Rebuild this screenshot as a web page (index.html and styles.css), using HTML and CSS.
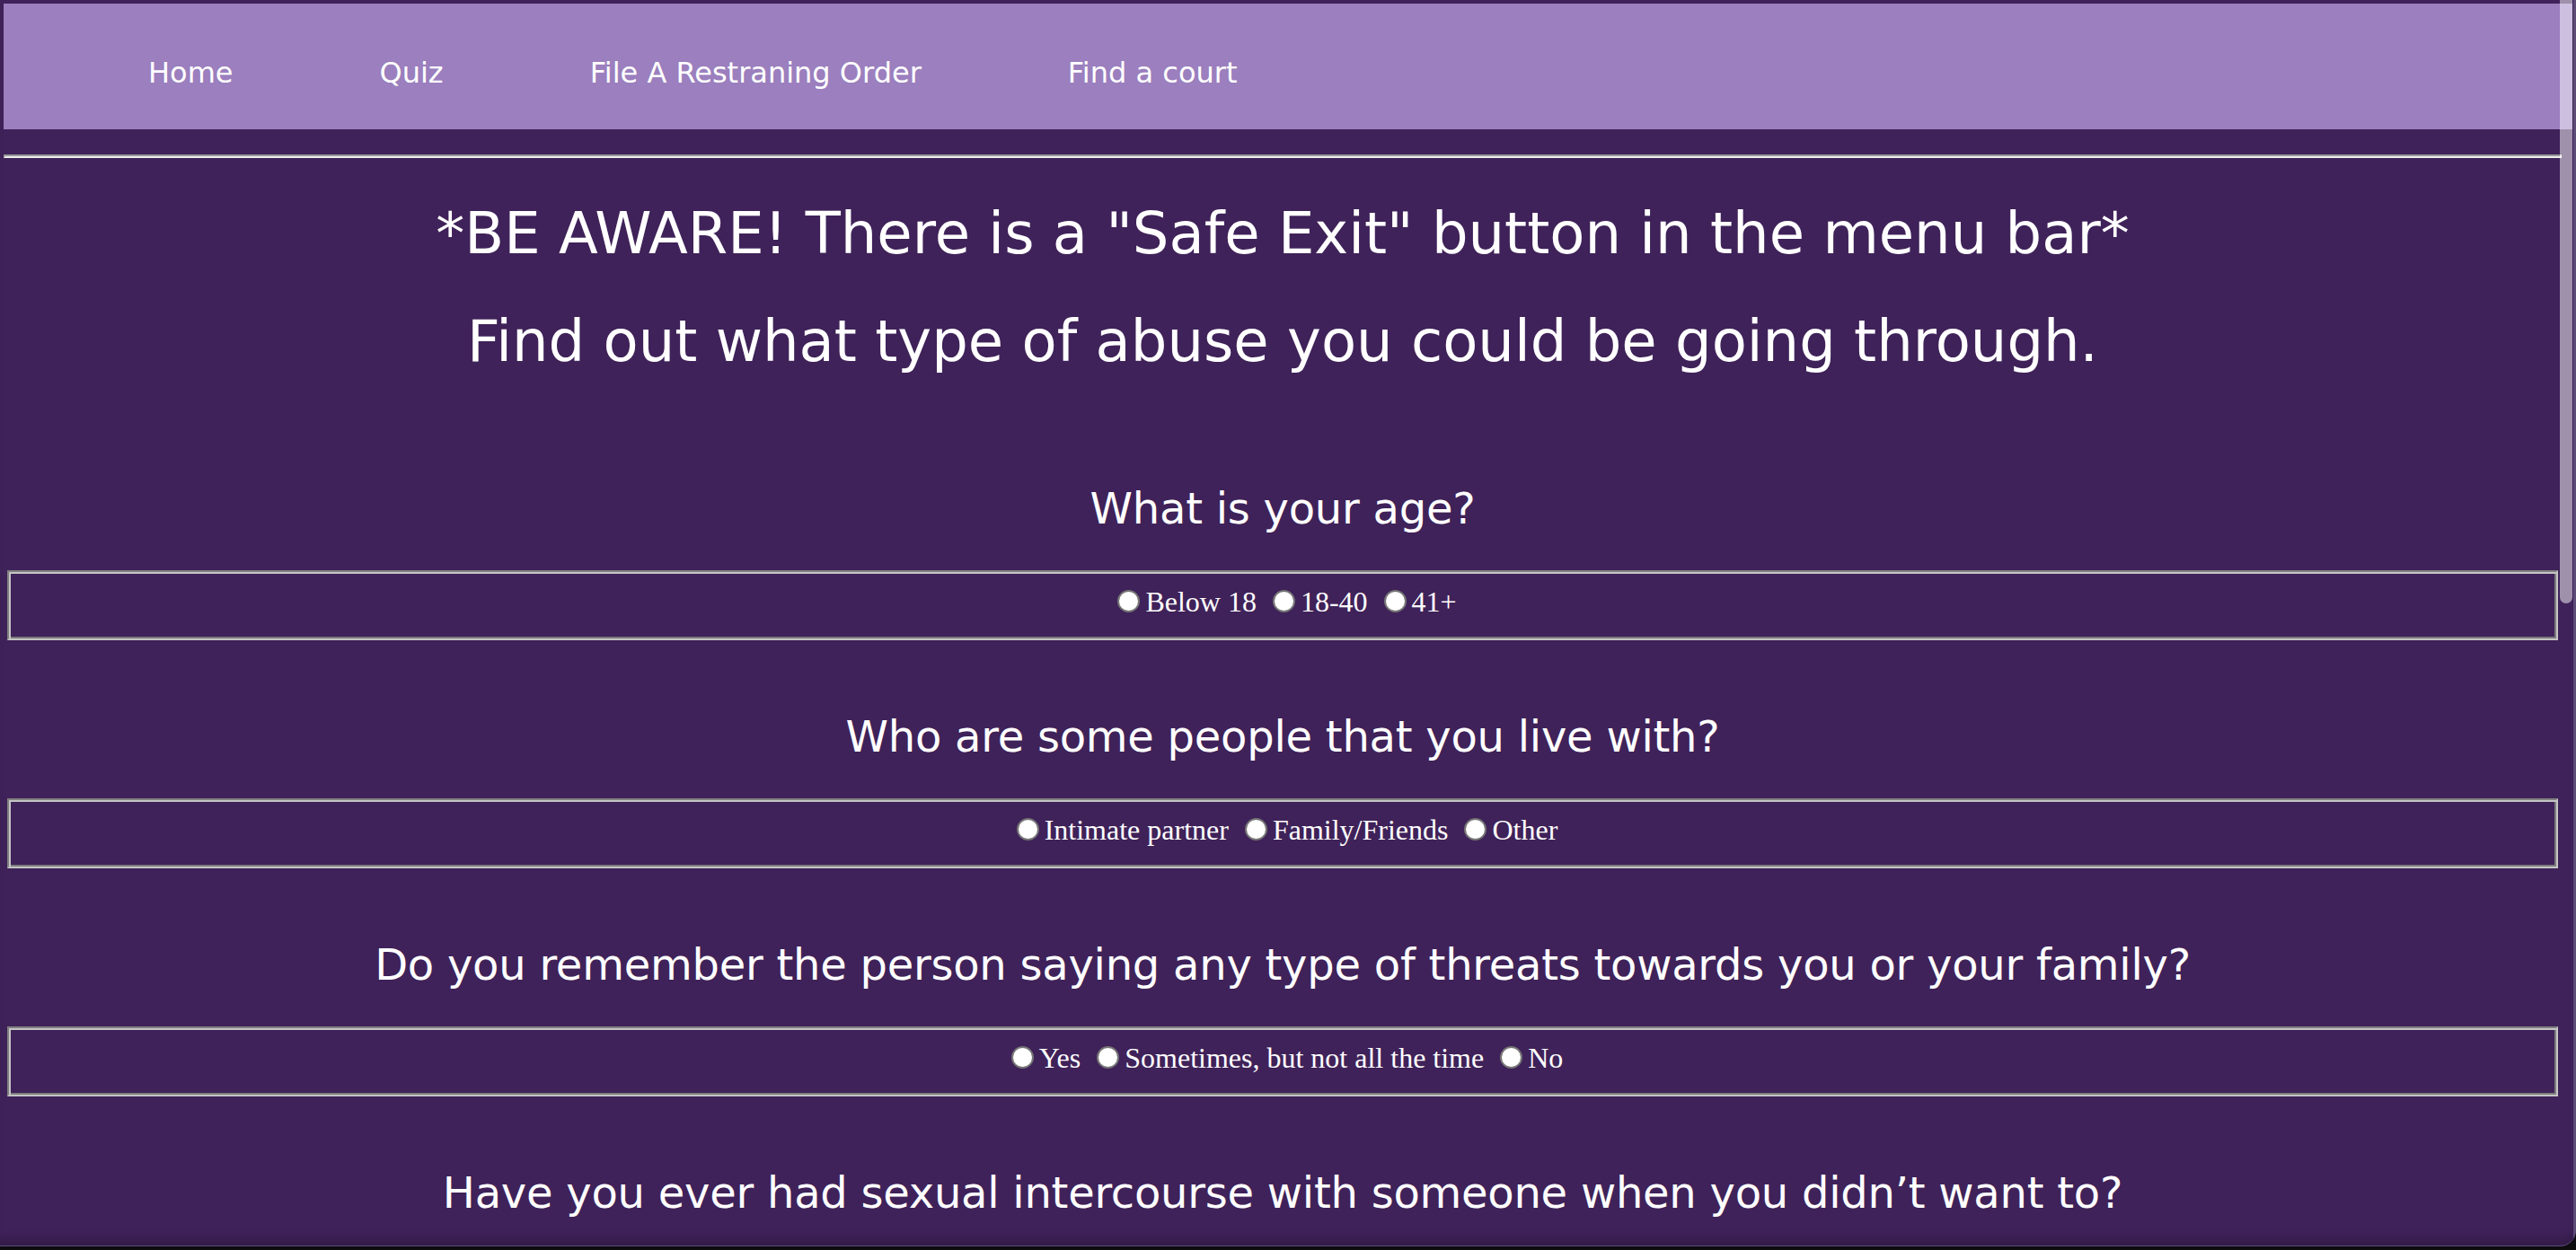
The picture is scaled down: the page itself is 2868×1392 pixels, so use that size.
FILE: index.html
```html
<!DOCTYPE html>
<html lang="en">
<head>
<meta charset="utf-8">
<title>Quiz</title>
<link rel="stylesheet" href="styles.css">
</head>
<body>
<div class="window">
  <div class="viewport">
    <nav class="topnav">
      <a href="#">Home</a>
      <a href="#">Quiz</a>
      <a href="#">File A Restraning Order</a>
      <a href="#">Find a court</a>
    </nav>
    <main class="content">
      <hr class="rule">
      <h1 class="title">*BE AWARE! There is a "Safe Exit" button in the menu bar*</h1>
      <h1 class="title">Find out what type of abuse you could be going through.</h1>
      <form class="quiz">
        <section class="question">
          <h2>What is your age?</h2>
          <fieldset class="options">
            <label><input type="radio" name="age">Below 18</label>
            <label><input type="radio" name="age">18-40</label>
            <label><input type="radio" name="age">41+</label>
          </fieldset>
        </section>
        <section class="question">
          <h2>Who are some people that you live with?</h2>
          <fieldset class="options">
            <label><input type="radio" name="live">Intimate partner</label>
            <label><input type="radio" name="live">Family/Friends</label>
            <label><input type="radio" name="live">Other</label>
          </fieldset>
        </section>
        <section class="question">
          <h2>Do you remember the person saying any type of threats towards you or your family?</h2>
          <fieldset class="options">
            <label><input type="radio" name="threats">Yes</label>
            <label><input type="radio" name="threats">Sometimes, but not all the time</label>
            <label><input type="radio" name="threats">No</label>
          </fieldset>
        </section>
        <section class="question">
          <h2>Have you ever had sexual intercourse with someone when you didn’t want to?</h2>
        </section>
      </form>
    </main>
    <div class="scroll-thumb"></div>
  </div>
  <div class="edge"></div>
</div>
</body>
</html>
```

FILE: styles.css
```css
html, body {
  margin: 0;
  padding: 0;
}

body {
  background: #0d0c0f;
  width: 2868px;
  height: 1392px;
  overflow: hidden;
}

.window {
  display: flex;
  height: 1388px;
  box-sizing: border-box;
  border-bottom: 1px solid #5e4a7e;
  background: #3f2259;
  border-bottom-right-radius: 18px;
  overflow: hidden;
  box-shadow: inset 0 -14px 14px -10px rgba(0, 0, 0, 0.28);
}

.viewport {
  position: relative;
  flex: 1;
  padding: 4px 0 0 4px;
  overflow: hidden;
}

.edge {
  width: 3px;
  border-left: 1px solid #3a2053;
  background: #5d4b78;
}

.topnav {
  display: flex;
  gap: 163px;
  box-sizing: border-box;
  height: 140px;
  padding: 55px 0 0 161px;
  background: #9b7fbe;
}

.topnav a {
  font-family: "DejaVu Sans", "Open Sans", sans-serif;
  font-size: 32px;
  line-height: 44px;
  color: #ffffff;
  text-decoration: none;
  white-space: nowrap;
}

.content {
  margin-right: 12px;
  color: #ffffff;
}

.rule {
  margin: 28px 0 0;
  height: 0;
  border-style: solid;
  border-width: 2px;
  border-color: #9a9a9a #ececec #ececec #9a9a9a;
}

.title {
  margin: 42px 0 0;
  font-family: "DejaVu Sans", "Open Sans", sans-serif;
  font-weight: normal;
  font-size: 64px;
  line-height: 78px;
  text-align: center;
}

.title:first-of-type {
  margin-top: 45px;
}

.quiz {
  margin: 0;
  padding-top: 40px;
}

.question h2 {
  margin: 78px 0 40px;
  font-family: "DejaVu Sans", "Open Sans", sans-serif;
  font-weight: normal;
  font-size: 48px;
  line-height: 58px;
  letter-spacing: -0.25px;
  text-align: center;
}

.options {
  margin: 0 4px;
  padding: 15px 0 23px;
  min-width: 0;
  border-style: solid;
  border-width: 2px;
  border-color: #808080 #c4c4c4 #c4c4c4 #808080;
  box-shadow: inset 2px 2px 0 #c4c4c4, inset -2px -2px 0 #7c7c7c;
  text-align: center;
  font-family: "Liberation Serif", "Times New Roman", serif;
  font-size: 32px;
  line-height: 36px;
  color: #ffffff;
}

.options input {
  -webkit-appearance: none;
  appearance: none;
  display: inline-block;
  box-sizing: border-box;
  width: 25px;
  height: 25px;
  margin: 0 6px 0 10px;
  border: 2px solid #767676;
  border-radius: 50%;
  background: #ffffff;
  vertical-align: -1px;
}

.scroll-thumb {
  position: absolute;
  top: 0;
  right: 0;
  width: 14px;
  height: 672px;
  border-radius: 0 0 7px 7px;
  background: rgba(255, 255, 255, 0.5);
}
```
